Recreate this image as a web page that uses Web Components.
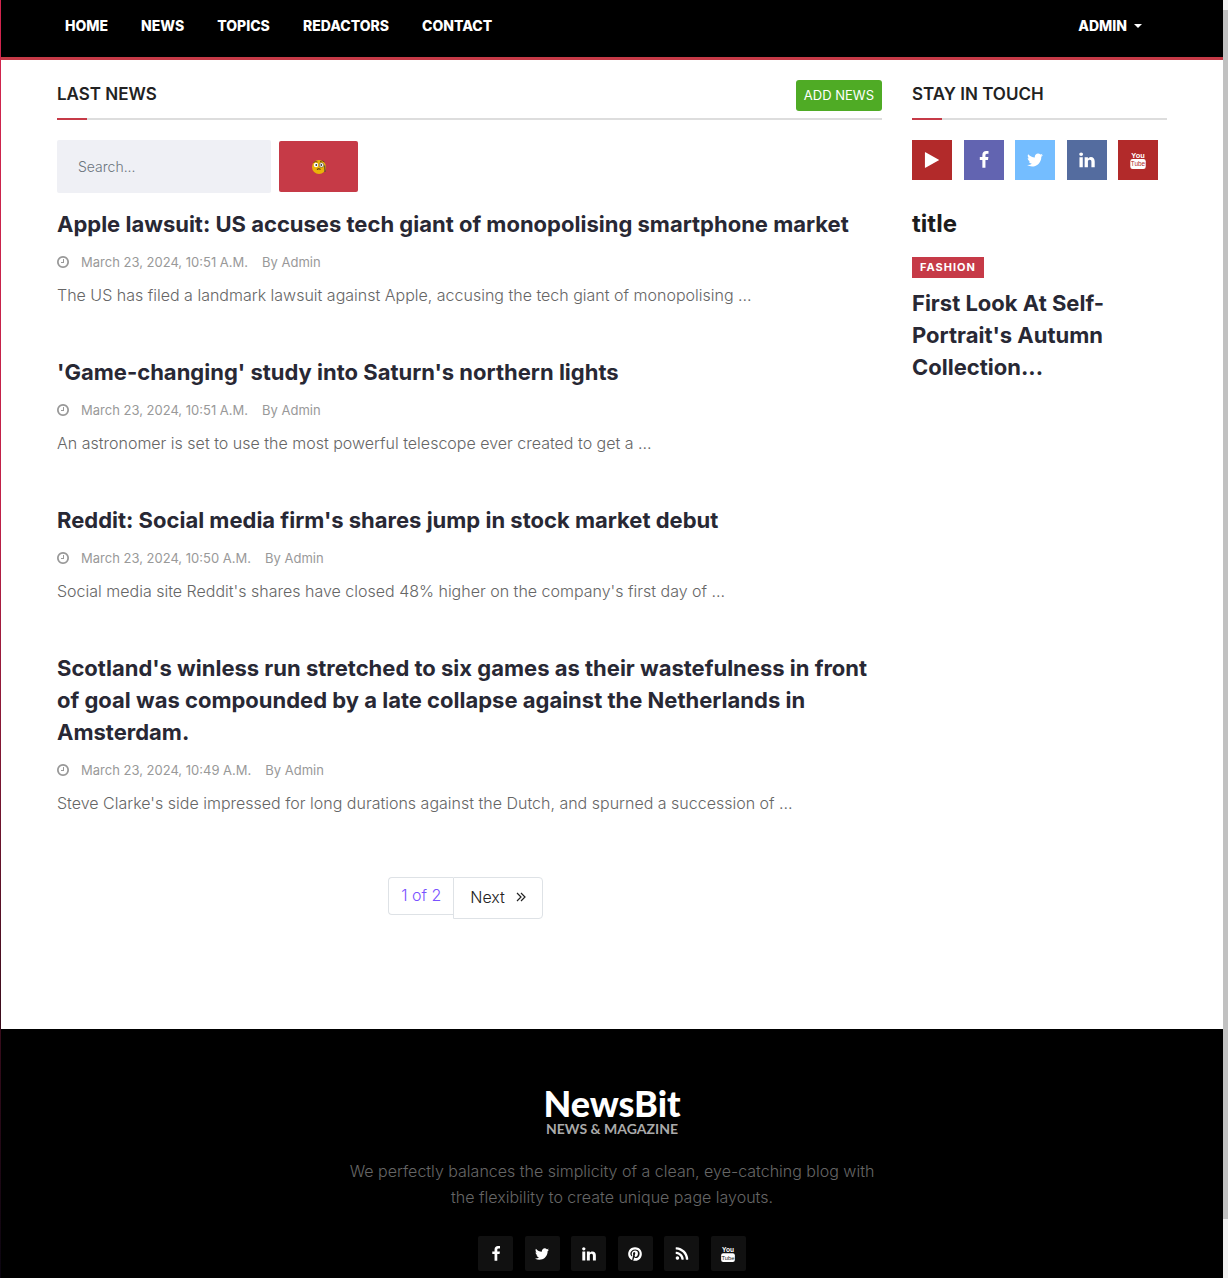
<!DOCTYPE html>
<html lang="en">
<head>
<meta charset="utf-8">
<title>NewsBit</title>
<style>
  :root {
    --accent: #c63a47;
    --body-font: Inter, "Liberation Sans", sans-serif;
    --head-font: Inter, "Liberation Sans", sans-serif;
    --ink: #222;
    --rule: #ddd;
  }
  html, body { margin: 0; }
  body { font: 300 16px/26px var(--body-font); color: #666; background: #fff; }
</style>
</head>
<body>
<news-page>
  <site-header slot="header">
    <nav-link href="#home">HOME</nav-link>
    <nav-link href="#news">NEWS</nav-link>
    <nav-link href="#topics">TOPICS</nav-link>
    <nav-link href="#redactors">REDACTORS</nav-link>
    <nav-link href="#contact">CONTACT</nav-link>
    <user-menu slot="user">ADMIN</user-menu>
  </site-header>

  <section-heading slot="main">LAST NEWS<add-button slot="action">ADD NEWS</add-button></section-heading>
  <search-form slot="main"></search-form>
  <news-item slot="main" date="March 23, 2024, 10:51 A.M.">Apple lawsuit: US accuses tech giant of monopolising smartphone market<span slot="summary">The US has filed a landmark lawsuit against Apple, accusing the tech giant of monopolising …</span></news-item>
  <news-item slot="main" date="March 23, 2024, 10:51 A.M.">'Game-changing' study into Saturn's northern lights<span slot="summary">An astronomer is set to use the most powerful telescope ever created to get a …</span></news-item>
  <news-item slot="main" date="March 23, 2024, 10:50 A.M.">Reddit: Social media firm's shares jump in stock market debut<span slot="summary">Social media site Reddit's shares have closed 48% higher on the company's first day of …</span></news-item>
  <news-item slot="main" date="March 23, 2024, 10:49 A.M.">Scotland's winless run stretched to six games as their wastefulness in front of goal was compounded by a late collapse against the Netherlands in Amsterdam.<span slot="summary">Steve Clarke's side impressed for long durations against the Dutch, and spurned a succession of …</span></news-item>
  <page-nav slot="main"></page-nav>

  <section-heading slot="side">STAY IN TOUCH</section-heading>
  <social-row slot="side">
    <social-link icon="play" label="Video" style="--tile:#b22a2a"></social-link>
    <social-link icon="facebook" label="Facebook" style="--tile:#6264b1"></social-link>
    <social-link icon="twitter" label="Twitter" style="--tile:#74bdff"></social-link>
    <social-link icon="linkedin" label="LinkedIn" style="--tile:#546c9f"></social-link>
    <social-link icon="youtube" label="YouTube" style="--tile:#b22a2a"></social-link>
  </social-row>
  <side-feature slot="side" heading="title" tag="FASHION">First Look At Self-Portrait's Autumn Collection...</side-feature>

  <site-footer slot="footer">
    We perfectly balances the simplicity of a clean, eye-catching blog with the flexibility to create unique page layouts.
    <social-row slot="social" compact>
      <social-link icon="facebook" label="Facebook"></social-link>
      <social-link icon="twitter" label="Twitter"></social-link>
      <social-link icon="linkedin" label="LinkedIn"></social-link>
      <social-link icon="pinterest" label="Pinterest"></social-link>
      <social-link icon="rss" label="RSS"></social-link>
      <social-link icon="youtube" label="YouTube"></social-link>
    </social-row>
  </site-footer>
</news-page>

<script>
const ICONS = {
  play: '<path d="M1576 927l-1328 738q-23 13-39.500 3t-16.500-36v-1472q0-26 16.500-36t39.500 3l1328 738q23 13 23 31t-23 31z"/>',
  facebook: '<path d="M1343 12v264h-157q-86 0-116 36t-30 108v189h293l-39 296h-254v759h-306v-759h-255v-296h255v-218q0-186 104-288.500t277-102.500q147 0 228 12z"/>',
  twitter: '<path d="M1684 408q-67 98-162 167 1 14 1 42 0 130-38 259.500t-115.500 248.500-184.500 210.500-258 146-323 54.500q-271 0-496-145 35 4 78 4 225 0 401-138-105-2-188-64.500t-114-159.500q33 5 61 5 43 0 85-11-112-23-185.500-111.500t-73.500-205.500v-4q68 38 146 41-66-44-105-115t-39-154q0-88 44-163 121 149 294.500 238.500t371.500 99.500q-8-38-8-74 0-134 94.500-228.500t228.500-94.500q140 0 236 102 109-21 205-78-37 115-142 178 93-10 186-50z"/>',
  linkedin: '<path d="M477 625v991h-330v-991h330zm21-306q1 73-50.500 122t-135.500 49h-2q-82 0-132-49t-50-122q0-74 51.500-122.500t134.500-48.500 133 48.500 51 122.500zm1166 729v568h-329v-530q0-105-40.500-164.500t-126.500-59.500q-63 0-105.500 34.500t-63.500 85.500q-11 30-11 81v553h-329q2-399 2-647t-1-296l-1-48h329v144h-2q20-32 41-56t56.500-52 87-43.500 114.500-15.500q171 0 275 113.500t104 332.500z"/>',
  pinterest: '<path d="M1664 896q0 209-103 385.500t-279.500 279.500-385.500 103q-111 0-218-32 59-93 78-164 9-34 54-211 20 39 73 67.500t114 28.500q121 0 216-68.500t147-188.500 52-270q0-114-59.500-214t-172.500-163-255-63q-105 0-196 29t-154.500 77-109 110.500-67 129.500-21.500 134q0 104 40 183t117 111q30 12 38-20 2-7 8-31t8-30q6-23-11-43-51-61-51-151 0-151 104.500-259.500t273.500-108.500q151 0 235.500 82t84.500 213q0 170-68.500 289t-175.500 119q-61 0-98-43.500t-23-104.500q8-35 26.500-93.500t30-103 11.500-75.500q0-50-27-83t-77-33q-62 0-105 57t-43 142q0 73 25 122l-99 418q-17 70-13 177-206-91-333-281t-127-423q0-209 103-385.500t279.500-279.500 385.500-103 385.500 103 279.500 279.500 103 385.500z"/>',
  rss: '<path d="M576 1344q0 80-56 136t-136 56-136-56-56-136 56-136 136-56 136 56 56 136zm512 123q2 28-17 48-18 21-47 21h-135q-25 0-43-16.500t-20-41.500q-22-229-184.500-391.500t-391.500-184.500q-25-2-41.500-20t-16.500-43v-135q0-29 21-47 17-17 43-17h5q160 13 306 80.500t259 181.500q114 113 181.500 259t80.500 306zm512 2q2 27-18 47-18 20-46 20h-143q-26 0-44.500-17.500t-19.500-42.500q-12-215-101-408.500t-231.500-336-336-231.500-408.500-102q-25-1-42.500-19.500t-17.500-43.500v-143q0-28 20-46 18-18 44-18h3q262 13 501.500 120t425.500 294q187 186 294 425.500t120 501.500z"/>',
  clock: '<path d="M1024 544v448q0 14-9 23t-23 9h-320q-14 0-23-9t-9-23v-64q0-14 9-23t23-9h224v-352q0-14 9-23t23-9h64q14 0 23 9t9 23zm416 352q0-148-73-273t-198-198-273-73-273 73-198 198-73 273 73 273 198 198 273 73 273-73 198-198 73-273zm224 0q0 209-103 385.500t-279.500 279.500-385.500 103-385.500-103-279.500-279.500-103-385.500 103-385.500 279.500-279.500 385.500-103 385.500 103 279.500 279.500 103 385.500z"/>',
  youtube: '<text x="896" y="650" text-anchor="middle" font-family="Liberation Sans, sans-serif" font-weight="700" font-size="740">You</text><rect x="128" y="800" width="1536" height="992" rx="230"/><text x="896" y="1520" text-anchor="middle" font-family="Liberation Sans, sans-serif" font-weight="400" font-size="640" style="fill:var(--tile)">Tube</text>'
};
const icon = (name, size) => `<svg width="${size}" height="${size}" viewBox="0 0 1792 1792" fill="currentColor" overflow="visible" aria-hidden="true">${ICONS[name]}</svg>`;

function define(tag, render) {
  customElements.define(tag, class extends HTMLElement {
    constructor() {
      super();
      this.attachShadow({ mode: "open" });
    }
    connectedCallback() {
      const t = document.createElement("template");
      t.innerHTML = "<style>*{box-sizing:border-box}:host{display:block}</style>" + render(this);
      this.shadowRoot.replaceChildren(t.content.cloneNode(true));
    }
  });
}

define("news-page", () => `
  <style>
    :host { display: flex; min-height: 100vh; }
    .edge { width: 1px; background: linear-gradient(#d2254e 0%, #c02048 40%, #3a0c1c 80%, #0a0510 100%); }
    .page { flex: 1; min-width: 0; display: flex; flex-direction: column; }
    .columns { display: flex; gap: 30px; width: 100%; max-width: 1140px; margin: 0 auto; padding: 20px 15px 110px; }
    main { flex: 1; min-width: 0; }
    aside { width: 255px; }
    .scroll { width: 5px; display: flex; flex-direction: column; background: #f1f1f1; padding: 10px 0 59px; }
    .scroll i { flex: 1; background: #c1c1c1; }
    .foot { flex: 1; display: grid; }
  </style>
  <div class="edge"></div>
  <div class="page">
    <slot name="header"></slot>
    <div class="columns">
      <main><slot name="main"></slot></main>
      <aside><slot name="side"></slot></aside>
    </div>
    <div class="foot"><slot name="footer"></slot></div>
  </div>
  <div class="scroll" aria-hidden="true"><i></i></div>`);

define("site-header", () => `
  <style>
    header { background: #000; border-bottom: 3px solid var(--accent); height: 60px; }
    nav { display: flex; gap: 33px; max-width: 1140px; margin: 0 auto; padding: 13px 40px 0 23px; font: 800 14px/26px var(--body-font); color: #fff; }
    .user { margin-left: auto; }
  </style>
  <header><nav><slot></slot><div class="user"><slot name="user"></slot></div></nav></header>`);

define("nav-link", el => `
  <style>a { color: #fff; text-decoration: none; }</style>
  <a href="${el.getAttribute("href")}"><slot></slot></a>`);

define("user-menu", () => `
  <style>
    button { display: flex; align-items: center; gap: 7px; margin: 0; padding: 0; border: 0; background: none; color: #fff; font: inherit; }
    i { border: 4px solid transparent; border-top-color: #fff; border-bottom: 0; }
  </style>
  <button type="button" aria-haspopup="menu"><slot></slot><i></i></button>`);

define("section-heading", () => `
  <style>
    .bar { display: flex; justify-content: space-between; height: 40px; margin-bottom: 20px; background: linear-gradient(var(--accent), var(--accent)) 0 100% / 30px 2px no-repeat, linear-gradient(var(--rule), var(--rule)) 0 100% / 100% 2px no-repeat; }
    h2 { margin: 0; font: 600 17px/28px var(--head-font); color: var(--ink); }
  </style>
  <div class="bar"><h2><slot></slot></h2><slot name="action"></slot></div>`);

define("add-button", () => `
  <style>
    button { display: block; height: 31px; min-width: 86px; padding: 0 8px; border: 0; border-radius: 3px; background: #4fab25; color: #fff; font: 400 13px/31px var(--head-font); }
  </style>
  <button type="button"><slot></slot></button>`);

define("search-form", () => `
  <style>
    form { display: flex; align-items: center; gap: 8px; margin-bottom: 15px; }
    input { width: 214px; height: 53px; padding: 0 21px; border: 0; border-radius: 2px; background: #eff0f5; font: 300 14px/20px var(--body-font); color: #333; }
    input::placeholder { color: #6c757d; opacity: 1; }
    button { display: grid; place-items: center; width: 79px; height: 51px; padding: 0; border: 0; border-radius: 2px; background: var(--accent); }
  </style>
  <form role="search">
    <input type="search" placeholder="Search..." aria-label="Search">
    <button type="button" aria-label="Search news">
      <svg width="16" height="16" viewBox="0 0 16 16" aria-hidden="true">
        <circle cx="8" cy="8" r="7" fill="#eab308"/>
        <path d="M2.500 3.500Q4.500 1.800 6.500 3M9 2.500Q12 1 13.500 3" fill="none" stroke="#6b4a12" stroke-width="1"/>
        <circle cx="5" cy="6" r="2.200" fill="#fff"/><circle cx="10.500" cy="6" r="2.300" fill="#fff" stroke="#5b4a35" stroke-width=".6"/>
        <circle cx="5.300" cy="6" r=".9" fill="#333"/><circle cx="10.300" cy="6" r=".9" fill="#333"/>
        <path d="M13.700 6.500L14 13" stroke="#5b4a35" stroke-width="1.200"/>
        <path d="M6 10.500Q8 9 9.500 10.500" fill="none" stroke="#4a3210" stroke-width="1.100"/>
      </svg>
    </button>
  </form>`);

define("news-item", el => `
  <style>
    article { padding-bottom: 48px; }
    h3 { margin: 0 0 8px; font: 650 22px/32px var(--head-font); color: #282834; }
    a { color: inherit; text-decoration: none; }
    .meta { display: flex; align-items: center; margin-bottom: 6px; font: 400 13px/28px var(--head-font); color: #999; }
    svg { margin: 0 11px 0 -1px; }
    .by { margin-left: 14px; }
    p { margin: 0; font: 300 16px/26px var(--body-font); color: #666; }
  </style>
  <article>
    <h3><a href="#article"><slot></slot></a></h3>
    <div class="meta">${icon("clock", 14)}<time>${el.getAttribute("date")}</time><span class="by">By Admin</span></div>
    <p><slot name="summary"></slot></p>
  </article>`);

define("page-nav", () => `
  <style>
    nav { display: flex; justify-content: center; align-items: flex-start; padding: 13px 8px 0 0; font: 300 16px/24px var(--body-font); }
    span, a { display: flex; align-items: center; padding: 0 16px 2px; border: 1px solid #dee2e6; }
    span { height: 38px; padding: 0 12px 2px; border-right: 0; border-radius: 4px 0 0 4px; color: #7952ff; }
    a { height: 42px; gap: 11px; border-radius: 0 4px 4px 0; color: #222; text-decoration: none; }
  </style>
  <nav aria-label="Pages"><span>1 of 2</span><a href="#page2">Next
    <svg width="10" height="10" viewBox="0 0 10 10" fill="none" stroke="#222" stroke-width="1.200" aria-hidden="true"><path d="M1 1l4 4-4 4M5 1l4 4-4 4"/></svg></a></nav>`);

define("social-row", el => `
  <style>
    .row { display: flex; justify-content: space-between; ${el.hasAttribute("compact") ? "width:268px;margin:0 auto" : "margin:0 9px 28px 0"}; }
  </style>
  <div class="row"><slot></slot></div>`);

define("social-link", el => {
  const small = el.parentElement.hasAttribute("compact");
  return `
  <style>
    :host { --tile: #111; }
    a { display: grid; place-items: center; width: ${small ? 35 : 40}px; height: ${small ? 35 : 40}px; border-radius: ${small ? 2 : 0}px; background: var(--tile); color: #fff; }
  </style>
  <a href="#${el.getAttribute("icon")}" aria-label="${el.getAttribute("label")}">${icon(el.getAttribute("icon"), small ? 16 : 18)}</a>`;
});

define("side-feature", el => `
  <style>
    h2 { margin: 0 0 17px; font: 700 24px/32px var(--head-font); color: #1c1c1c; }
    .tag { display: inline-block; vertical-align: top; height: 21px; margin-bottom: 9px; padding: 0 8px; background: var(--accent); color: #fff; font: 700 11px/21px var(--body-font); letter-spacing: 1px; text-decoration: none; }
    h3 { margin: 0; font: 650 22px/32px var(--head-font); color: #282834; }
  </style>
  <h2>${el.getAttribute("heading")}</h2>
  <a class="tag" href="#tag">${el.getAttribute("tag")}</a>
  <h3><slot></slot></h3>`);

define("site-footer", () => `
  <style>
    footer { height: 100%; background: #000; padding: 56px 15px 7px; text-align: center; }
    .logo { display: inline-flex; flex-direction: column; margin-bottom: 22px; font-family: Lato, sans-serif; text-decoration: none; }
    .logo b { font-weight: 900; font-size: 36px; line-height: 36px; color: #fff; }
    .logo small { font-weight: 700; font-size: 14px; line-height: 15px; color: #aaa; }
    p { max-width: 540px; margin: 0 auto 26px; font: 300 16px/26px var(--body-font); color: #666; }
  </style>
  <footer>
    <a class="logo" href="#home"><b>NewsBit</b><small>NEWS &amp; MAGAZINE</small></a>
    <p><slot></slot></p>
    <slot name="social"></slot>
  </footer>`);
</script>
</body>
</html>
